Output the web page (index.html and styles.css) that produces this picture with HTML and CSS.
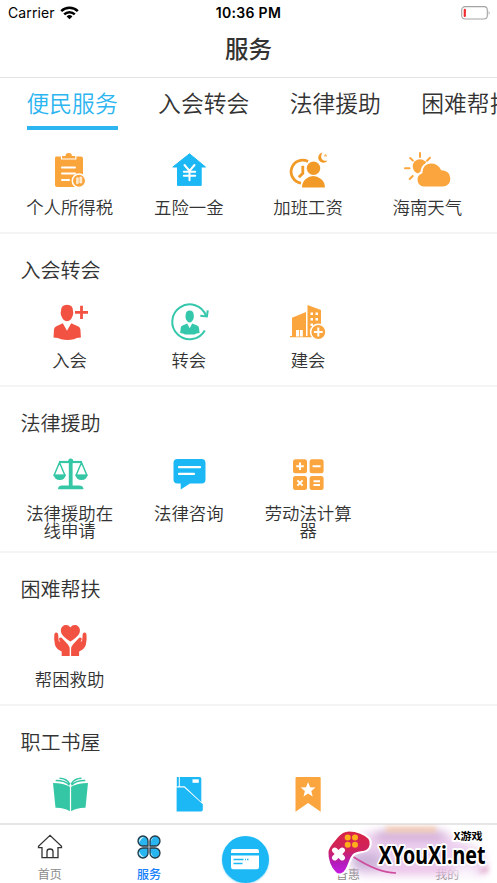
FILE: index.html
```html
<!DOCTYPE html>
<html lang="zh-CN">
<head>
<meta charset="utf-8">
<title>服务</title>
<link rel="stylesheet" href="styles.css">
</head>
<body>
<div class="screen">
  <header class="status">
    <div class="carrier">Carrier
      <svg width="19" height="14" viewBox="0 0 19 14"><g fill="none" stroke="#000" stroke-width="2.5"><path d="M1.2 5.2a12 12 0 0 1 16.6 0"/><path d="M4.2 8.3a7.6 7.6 0 0 1 10.6 0"/></g><path d="M9.5 13.3 6.6 10.5a4.2 4.2 0 0 1 5.8 0z"/></svg>
    </div>
    <div class="clock">10:36 PM</div>
    <svg class="battery" width="30" height="14" viewBox="0 0 30 14"><rect x=".7" y=".6" width="25.6" height="12.4" rx="3.4" fill="#fff" stroke="#a3a3a3" stroke-width="1.1"/><rect x="2.7" y="2.7" width="2.2" height="8.3" rx="1" fill="#f22d30"/><path d="M27.7 4.5q1.8 2.3 0 4.6z" fill="#999"/></svg>
  </header>
  <h1 class="title">服务</h1>
  <nav class="tabs">
    <div class="tab active">便民服务</div><div class="tab">入会转会</div><div class="tab">法律援助</div><div class="tab">困难帮扶</div>
  </nav>
  <main>
    <section class="group first">
      <div class="items">
        <div class="item">
          <svg class="icon" viewBox="0 0 36 36"><path fill="#faa43c" d="M4 4.5h25q2 0 2 2V32q0 3-3 3H5q-2 0-2-2V6.5q0-2 1-2z"/><path fill="#faa43c" stroke="#fff" stroke-width="1.2" d="M9.5 7V3.5H13q0-3 3.7-3t3.7 3h3.4V7z"/><path stroke="#fff" stroke-width="2" stroke-linecap="round" d="M10 15.5h13M10 21.5h13M10 28h7"/><circle cx="27" cy="28.7" r="6.7" fill="#faa43c" stroke="#fff" stroke-width="1.5"/><path d="M24.5 25.8h1.8v5.8h-1.8zM27.8 25h2v6h-2z" fill="#ffe8c8" stroke="#fff" stroke-width=".5"/></svg>
          <span>个人所得税</span></div>
        <div class="item">
          <svg class="icon" viewBox="0 0 36 36"><path fill="#1cb8f5" stroke="#1cb8f5" stroke-linejoin="round" d="M18.5 1.8 34.5 15h-4.3v18.4H6.5V15H1.8z"/><path fill="none" stroke="#fff" stroke-width="2" stroke-linecap="round" d="m13.5 13 5 6 5-6M12.8 19.7h11.4M12.8 23.7h11.4M18.5 19v9.3"/></svg>
          <span>五险一金</span></div>
        <div class="item">
          <svg class="icon tall" viewBox="0 0 38 38"><path fill="none" stroke="#f29a28" stroke-width="2.8" d="M19 10.4A11.6 11.6 0 1 0 12 32.2M13.8 14.8v7.5l-4 4"/><circle cx="24.5" cy="17.3" r="6.7" fill="#f29a28"/><path fill="#f29a28" d="M13 36.5q0-5 3.4-8.2 7.6-6.7 16 0 3.5 3 3.5 8.2zM33.5 1.5a5.2 5.2 0 1 0 5 8.3q-5.3.5-6.3-3.3-.2-3 1.3-5z"/><path fill="#f7be70" d="m36.5 2.5.6 1.2 1.4.1-1 1 .3 1.3-1.3-.7-1.2.7.2-1.4-1-.9 1.4-.1z"/></svg>
          <span>加班工资</span></div>
        <div class="item">
          <svg class="icon wide" viewBox="0 0 48 36"><circle cx="17" cy="14.5" r="7.3" fill="#fba53e"/><path stroke="#fba53e" stroke-width="2" stroke-linecap="round" d="M17 1v4M7.2 6l2.7 2.6M27 5.7l-3 3M2 16.2h4.5M9.7 24l-3 3"/><path fill="#fba53e" stroke="#fff" stroke-width="2" d="M20.7 35.5a7.8 7.8 0 0 1-2.3-15C19.3 7.2 35.3 8.4 38.7 17.2c12.8 0 12.3 18.3 1.5 18.3z"/></svg>
          <span>海南天气</span></div>
      </div>
    </section>
    <section class="group">
      <h2>入会转会</h2>
      <div class="items">
        <div class="item">
          <svg class="icon" viewBox="0 0 36 36"><path fill="#f25242" d="M9 7q0-6.2 6-6.2T21 7l.3 2q-.3 3.8-2.3 6.3-4 4-8 0-2-2.5-2.4-6.3zM10.8 19.2l4.2 7.5 4.2-7.5 7.2 3.2q1.9.8 2 3l.5 8q-4.6.2-7 1.8-6.5 1.4-12.8 0-2.8-1.6-7.6-1.8l.5-8q.2-2.2 1.9-3z"/><path d="M29.5 1.8V15M23 8.4h13" stroke="#f25242" stroke-width="2.8"/></svg>
          <span>入会</span></div>
        <div class="item">
          <svg class="icon tall" viewBox="0 0 38 38"><path d="M36 12.8A17.4 17.4 0 1 0 34.8 27.4" fill="none" stroke="#35c7ac" stroke-width="2"/><path d="m30.3 12.7 6.6.7.9-6" fill="none" stroke="#35c7ac" stroke-width="2"/><path fill="#35c7ac" d="M15.7 12q0-4.5 4-4.5t4 4.5l.2 1.5q0 3-2 5-2.2 2-4.5 0-2-2-2-5zM17.2 20.5l2.5 4.8 2.5-4.8 5 2q1.7.7 1.8 2.5l.6 4.9q-3.7.2-5.2 1.6h-9.3q-1.7-1.5-4.9-1.6l.5-4.9q0-1.8 1.8-2.5z"/></svg>
          <span>转会</span></div>
        <div class="item">
          <svg class="icon" viewBox="0 0 36 36"><path fill="#fba53e" d="M2 13.8 16 8v25H2zM17.5 1 31 6v27H17.5zM0 32h34v1.3H0z"/><path fill="#fff" d="M6 26h3v6.5H6zm3.8 0h3v6.5h-3zM20.5 8.5H23V11h-2.5zm5 0H28V11h-2.5zm-5 5.5H23v2.5h-2.5zm5 0H28v2.5h-2.5zm-5 5.5H23V22h-2.5z"/><circle cx="28.3" cy="28" r="7.7" fill="#fba53e" stroke="#fff" stroke-width="1.6"/><path stroke="#fff" stroke-width="2" d="M28.3 23.6v8.8M23.9 28h8.8"/></svg>
          <span>建会</span></div>
      </div>
    </section>
    <section class="group">
      <h2>法律援助</h2>
      <div class="items">
        <div class="item">
          <svg class="icon" viewBox="0 0 36 36"><g fill="none" stroke="#35c7a5" stroke-width="1.5" stroke-linejoin="round"><path d="m7.5 5.5-5.5 13h11zM29.5 5.5l-5.5 13h11z"/><path stroke-width="2.2" d="M7 5h23"/></g><path fill="#35c7a5" d="M1.7 17.5h12.1q-.8 5.5-6 5.5t-6.1-5.5zM23.4 17.5h12.1q-.8 5.5-6 5.5t-6.1-5.5zM16.8 4h3.8v25h-3.8zM6 32.3q0-3.8 4-3.8h17q4.5 0 4.5 3.8z"/><circle cx="18.7" cy="4" r="2.5" fill="#35c7a5"/></svg>
          <span>法律援助在线申请</span></div>
        <div class="item">
          <svg class="icon" viewBox="0 0 36 36"><path fill="#1cb8f5" d="M6.5 2h24q4 0 4 4v16.5q0 4-4 4H19l-9.3 6v-6H6.5q-4 0-4-4V6q0-4 4-4z"/><path stroke="#fff" stroke-width="2.2" stroke-linecap="round" d="M8 10.2h21M8 16.9h15"/></svg>
          <span>法律咨询</span></div>
        <div class="item">
          <svg class="icon" viewBox="0 0 36 36"><g fill="#fba53e"><rect x="3" y="2.2" width="14" height="14" rx="2.5"/><rect x="19.6" y="2.2" width="14" height="14" rx="2.5"/><rect x="3" y="19" width="14" height="14" rx="2.5"/><rect x="19.6" y="19" width="14" height="14" rx="2.5"/></g><path stroke="#fff" stroke-width="2" d="M10 5.5v7.6M6.2 9.3h7.6M22.6 9.3h8M7.4 23.4l5.2 5.2M12.6 23.4l-5.2 5.2M23.5 24.3H30M23.5 28H30"/></svg>
          <span>劳动法计算器</span></div>
      </div>
    </section>
    <section class="group">
      <h2>困难帮扶</h2>
      <div class="items">
        <div class="item">
          <svg class="icon" viewBox="0 0 36 36"><path fill="#f25242" d="M18.4 18.4C11.5 14 8.9 11.3 8.9 7.4c0-5.5 7-7.2 9.5-2.8 2.5-4.4 9.5-2.7 9.5 2.8 0 3.9-2.6 6.6-9.5 11z"/><path id="hand" fill="#f25242" d="M2.4 11q1.8-2.8 3.7 0l.6 7 1.6 1q-2.2-3.4-.5-4.3 1.3-.8 2.5.7l5.2 5.5q2.2 2.3 2.2 5.4V33h-8v-4.5q-5-2-6.7-6.5-1.4-6-.6-11z"/><use href="#hand" transform="matrix(-1 0 0 1 36.8 0)"/></svg>
          <span>帮困救助</span></div>
      </div>
    </section>
    <section class="group">
      <h2>职工书屋</h2>
      <div class="items">
        <div class="item">
          <svg class="icon" viewBox="0 0 36 36"><path fill="#35c7a5" d="M1 7q11 .2 16.9 3.7v24.6Q12.4 31.5 3.5 31.7zM36 7q-11 .2-16.9 3.7v24.6q5.5-3.8 14.4-3.6z"/><path d="M3.7 4.5Q13 4.4 17.5 9.2M7.5 2.2Q14.7 2.3 17.8 8M33.3 4.5Q24 4.4 19.5 9.2M29.5 2.2Q22.3 2.3 19.2 8" fill="none" stroke="#35c7a5" stroke-width="1.5"/></svg>
          <span></span></div>
        <div class="item">
          <svg class="icon" viewBox="0 0 36 36"><path fill="#1cb8f5" d="M5.8 1h2v9l-2 .7zM8.8 1h19.7q1.8 0 1.8 1.5V26L13.6 10.3H8.8zM5.6 11.5h7.6L31.8 28.3v5.4q0 1.8-1.8 1.8H5.6z"/><path fill="#fff" d="M21.5 3.3h6.3v3.5h-6.3z"/></svg>
          <span></span></div>
        <div class="item">
          <svg class="icon" viewBox="0 0 36 36"><path fill="#fba53e" d="M5.5 2q0-1 1-1h23.2q1 0 1 1v33.7l-12.6-8.8-12.6 8.8z"/><path fill="#fff" d="m18.1 6 2 5.2 5.4.2-4.2 3.6 1.4 5.4-4.6-3-4.6 3 1.4-5.4-4.2-3.6 5.4-.2z"/></svg>
          <span></span></div>
      </div>
    </section>
  </main>
  <footer class="bar">
    <div class="nav"><svg width="26" height="26" viewBox="0 0 26 26"><path d="M13 1.4 1.5 12.3v1.3H5v10h16v-10h3.5v-1.3zM10 23v-5.5q0-2.5 3-2.5t3 2.5V23" fill="none" stroke="#333" stroke-width="1.3"/></svg><span>首页</span></div>
    <div class="nav on"><svg width="26" height="26" viewBox="0 0 26 26"><g id="row"><path id="petal" fill="#29b5ef" d="M12 12H7.2A5 5 0 1 1 12 7z"/><path fill="#29b5ef" d="M14 12h4.8A5 5 0 1 0 14 7z"/><path fill="#d8f1fc" d="M3.2 8.5A4.4 4.4 0 0 1 8 3q-3.6 2-4.8 5.5zM14.8 8V6.3Q15.200 4 17.500 3 15.500 5.500 14.800 8z"/><path d="M12 12H7.200A5 5 0 1 1 12 7zM14 12h4.800A5 5 0 1 0 14 7z" fill="none" stroke="#263946" stroke-width="1.300"/></g><use href="#row" transform="matrix(1 0 0 -1 0 26)"/></svg><span>服务</span></div>
    <div class="nav"><div class="card"><svg width="28" height="22" viewBox="0 0 28 22"><path fill="#fff" d="M2 0h24q2 0 2 2v2H0V2q0-2 2-2zM0 6.500h28V18q0 2.300-2 2.300H2Q0 20.300 0 18z"/><path stroke="#1cb8f5" stroke-width="1.400" d="M2.500 10.500h10M14 10.500h1M16 10.500h1.500M2.500 14.500h9"/></svg></div></div>
    <div class="nav"><i class="gap"></i><span>普惠</span></div>
    <div class="nav"><i class="gap"></i><span>我的</span></div>
  </footer>
  <svg class="brand" width="177" height="59" viewBox="320 824 177 59">
    <defs>
      <filter id="soft" x="-30%" y="-60%" width="160%" height="220%"><feGaussianBlur stdDeviation="5"/></filter>
      <filter id="fine" x="-30%" y="-60%" width="160%" height="220%"><feGaussianBlur stdDeviation="2.5"/></filter>
      <linearGradient id="pad" x1="0" y1="0" x2="0" y2="1"><stop offset="0" stop-color="#d92343"/><stop offset=".45" stop-color="#cf235f"/><stop offset=".75" stop-color="#b21bbd"/><stop offset="1" stop-color="#c81ce5"/></linearGradient>
    </defs>
    <g filter="url(#soft)"><path fill="#ecd0ef" d="M364 833h82l38 20v22H360l-10-12z"/><path fill="#c08fc4" opacity=".7" d="M376 831h68v9h-68z"/><path fill="#bca5cf" opacity=".7" d="M352 853h28v16h-28z"/><path fill="#e9a6dc" opacity=".5" d="M386 866h70v7h-70z"/><path fill="#f9f4fb" d="M454 866h22v8h-22z"/></g>
    <g filter="url(#fine)"><path fill="#f3bd91" opacity=".75" d="M386 827h50v5h-50z"/><path fill="#d891bb" opacity=".7" d="M478 872l10-8v9z"/></g>
    <path d="M352 856q26 17 44 17" fill="none" stroke="#cf4b9d" stroke-width="1.5"/>
    <path d="M337 837C341 832 344 830.500 349 830.500C357 830.500 365 834 369 838C372 841.500 371 848 367 850.500C363 853 357 851.500 353.500 855C350 859 349.500 864 346.500 869.500C344 874.500 338.500 876 335.500 873C330 868 327 859 327.500 852C328 846 333 842 337 837Z" fill="url(#pad)" stroke="#fff" stroke-width="2"/>
    <g fill="#ffae1b"><circle cx="347.7" cy="837.5" r="3"/><circle cx="355" cy="837.5" r="3"/><circle cx="347.7" cy="844.7" r="3"/><circle cx="355" cy="844.7" r="3"/></g>
    <path stroke="#fff" stroke-width="5.5" stroke-linecap="round" d="m334.8 850.3 7.4 7.4M342.2 850.3l-7.4 7.4"/>
    <text class="site" x="378.5" y="863.5" textLength="107" lengthAdjust="spacingAndGlyphs">XYouXi.net</text>
    <text class="game" x="453.5" y="839.5" textLength="29" lengthAdjust="spacingAndGlyphs">X游戏</text>
  </svg>
</div>
</body>
</html>
```
FILE: styles.css
```css
* { box-sizing: border-box; }
body { margin: 0; background: #fff; color: #333; font-family: "Noto Sans CJK SC", sans-serif; }
.screen { position: relative; width: 497px; height: 883px; overflow: hidden; display: flex; flex-direction: column; }
.status { height: 26px; flex: none; display: grid; grid-template-columns: 1fr auto 1fr; align-items: center; padding: 0 6px 1px 8px; font-family: Inter, sans-serif; color: #000; font-size: 14px; }
.carrier { display: flex; align-items: center; gap: 5px; letter-spacing: .1px; }
.clock { margin-right: 2px; font-size: 14px; font-weight: 600; letter-spacing: .3px; }
.clock { position: static; }
.battery { justify-self: end; }
.title { height: 52px; flex: none; margin: 0; border-bottom: 1px solid #e4e4e4; font-size: 23.5px; font-weight: 500; line-height: 45px; text-align: center; }
.tabs { height: 63px; flex: none; display: flex; gap: 40.4px; padding-left: 26.5px; overflow: hidden; }
.tab { flex: none; height: 52px; font-size: 22.8px; font-weight: 350; line-height: 49px; white-space: nowrap; border-bottom: 4px solid transparent; }
.tab.active { color: #2cb5f0; border-color: #2cb5f0; }
main { flex: 1; min-height: 0; overflow: hidden; }
.group { padding-bottom: 13px; border-bottom: 2px solid #f4f4f4; }
.group h2 { margin: 0 0 0 20.5px; height: 70px; font-size: 20px; font-weight: 350; line-height: 72px; }
.first { padding-top: 11px; }
.first .item span { margin-top: 10px; }
.items { display: grid; grid-template-columns: repeat(4, 1fr); padding: 0 10px; }
.item { display: flex; flex-direction: column; align-items: center; }
.icon { width: 36px; height: 36px; display: block; overflow: visible; }
.icon.tall { width: 38px; height: 38px; margin: -1px 0; }
.icon.wide { width: 48px; }
.item span { width: 88px; min-height: 21px; margin-top: 11px; font-size: 17.4px; font-weight: 350; line-height: 17px; text-align: center; }
.bar { height: 60px; flex: none; display: grid; grid-template-columns: repeat(5, 1fr); background: #fff; border-top: 2px solid #e6e6e6; }
.nav { display: flex; flex-direction: column; align-items: center; padding-top: 9px; font-size: 12px; color: #8a8a8a; }
.nav span { line-height: 15px; margin-top: 5.5px; }
.nav.on { color: #157efb; font-weight: 500; }
.gap { width: 26px; height: 26px; }
.card { width: 47px; height: 47px; flex: none; margin: 2px 6px 0 0; display: flex; align-items: center; justify-content: center; border-radius: 50%; background: #1cb8f5; box-shadow: 0 1px 2px #9fdcf6; }
.brand { position: absolute; left: 320px; top: 824px; }
.brand text { font-family: "Noto Sans", "Noto Sans CJK SC", sans-serif; fill: #000; stroke: #fff; stroke-width: 4px; stroke-linejoin: round; paint-order: stroke; font-weight: 700; }
.site { font-size: 25px; }
.brand .game { font-size: 10.5px; font-family: "Noto Sans CJK SC", sans-serif; }
```
